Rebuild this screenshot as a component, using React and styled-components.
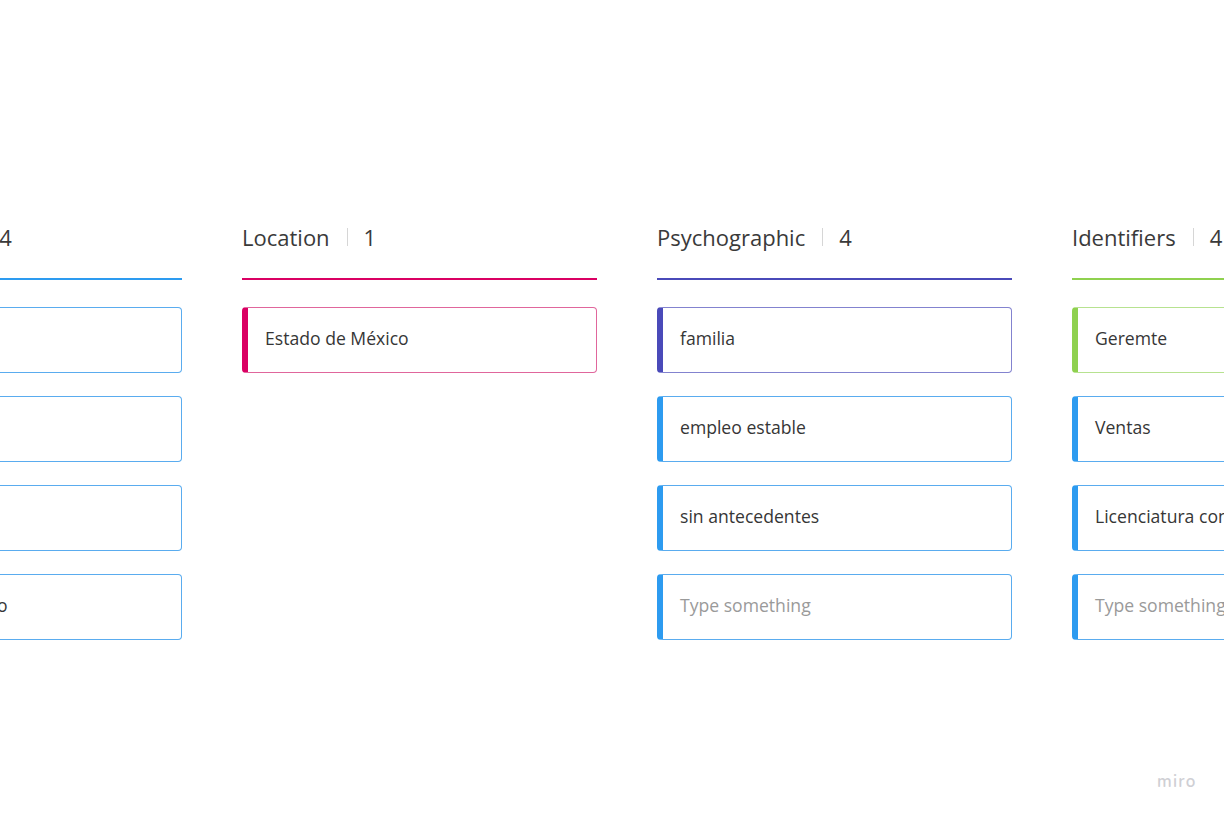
import React from "react";
import styled, { createGlobalStyle } from "styled-components";

const Global = createGlobalStyle`
  html, body { margin: 0; padding: 0; background: #ffffff; }
  body { font-family: "Open Sans", "Noto Sans", sans-serif; overflow: hidden; }
  #root { width: 1224px; height: 816px; }
`;

const Board = styled.div`
  position: relative;
  width: 1224px;
  height: 816px;
  overflow: hidden;
  background: #ffffff;
`;

const Row = styled.div`
  display: flex;
  gap: 60px;
  padding-top: 222px;
  margin-left: -173px;
`;

const Column = styled.div`
  flex: 0 0 355px;
  display: flex;
  flex-direction: column;
`;

const Header = styled.div`
  display: flex;
  align-items: center;
  height: 30px;
  font-size: 22px;
  font-weight: 400;
  color: #3a3a3a;
  white-space: nowrap;
`;

const Sep = styled.span`
  display: inline-block;
  width: 1px;
  height: 18px;
  background: #d6d6d6;
  margin: 0 16px 0 17px;
`;

const Rule = styled.div`
  height: 2px;
  margin-top: 26px;
  margin-bottom: 27px;
  background: ${(p) => p.$color};
`;

const Cards = styled.div`
  display: flex;
  flex-direction: column;
  gap: 23px;
`;

const Card = styled.div`
  box-sizing: border-box;
  height: 66px;
  display: flex;
  align-items: center;
  padding-left: 17px;
  padding-bottom: 5px;
  border: 1px solid ${(p) => p.$border};
  border-left: 6px solid ${(p) => p.$accent};
  border-radius: 4px;
  font-size: 17.6px;
  color: ${(p) => (p.$placeholder ? "#9a9a9a" : "#363636")};
  white-space: nowrap;
  overflow: hidden;
`;

const Logo = styled.div`
  position: absolute;
  left: 1157px;
  top: 770px;
  font-family: "Nunito", "Open Sans", sans-serif;
  font-size: 17px;
  font-weight: 600;
  letter-spacing: 1.2px;
  color: #cfcfd4;
`;

const BLUE = { accent: "#2d9bf0", border: "#5aacef" };
const PINK = { accent: "#da0063", border: "#e0669c" };
const INDIGO = { accent: "#4a4ab9", border: "#8383cf" };
const GREEN = { accent: "#8fd14f", border: "#b7e290" };

const columns = [
  {
    title: "Demographic",
    count: 4,
    line: "#2d9bf0",
    cards: [
      { text: "Hombre", c: BLUE },
      { text: "35 años", c: BLUE },
      { text: "Casado", c: BLUE },
      { text: "Estado civil: casado", c: BLUE },
    ],
  },
  {
    title: "Location",
    count: 1,
    line: "#da0063",
    cards: [{ text: "Estado de México", c: PINK }],
  },
  {
    title: "Psychographic",
    count: 4,
    line: "#4a4ab9",
    cards: [
      { text: "familia", c: INDIGO },
      { text: "empleo estable", c: BLUE },
      { text: "sin antecedentes", c: BLUE },
      { text: "Type something", c: BLUE, ph: true },
    ],
  },
  {
    title: "Identifiers",
    count: 4,
    line: "#8fd14f",
    cards: [
      { text: "Geremte", c: GREEN },
      { text: "Ventas", c: BLUE },
      { text: "Licenciatura completa", c: BLUE },
      { text: "Type something", c: BLUE, ph: true },
    ],
  },
];

export default function App() {
  return (
    <Board>
      <Global />
      <Row>
        {columns.map((col) => (
          <Column key={col.title}>
            <Header>
              {col.title}
              <Sep />
              {col.count}
            </Header>
            <Rule $color={col.line} />
            <Cards>
              {col.cards.map((card, i) => (
                <Card
                  key={i}
                  $accent={card.c.accent}
                  $border={card.c.border}
                  $placeholder={card.ph}
                >
                  {card.text}
                </Card>
              ))}
            </Cards>
          </Column>
        ))}
      </Row>
      <Logo>miro</Logo>
    </Board>
  );
}
